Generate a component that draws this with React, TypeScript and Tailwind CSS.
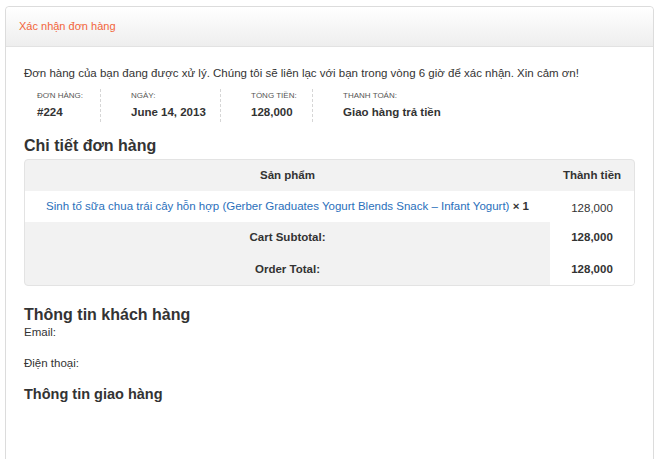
const font = { fontFamily: '"Liberation Sans", Arial, sans-serif' };

const details = [
  { label: 'Đơn hàng:', value: '#224', w: 'w-[64px]' },
  { label: 'Ngày:', value: 'June 14, 2013', w: 'w-[90px]' },
  { label: 'Tổng tiền:', value: '128,000', w: 'w-[62px]' },
  { label: 'Thanh toán:', value: 'Giao hàng trả tiền', w: '' },
];

export default function App() {
  return (
    <div className="h-[459px] overflow-hidden bg-white px-[5px] pt-[6px] text-[#333]" style={font}>
      <div className="h-[470px] rounded-[4px] border border-[#dcdcdc] bg-white">
        {/* Header */}
        <div className="flex h-[40px] items-center rounded-t-[4px] border-b border-[#e2e2e2] bg-gradient-to-b from-white to-[#eeeeee] pl-[13px]">
          <h2 className="text-[11px] text-[#f2643a]">Xác nhận đơn hàng</h2>
        </div>

        <div className="px-[18px] pt-[19px]">
          <p className="text-[11.5px] leading-[14px]">
            Đơn hàng của bạn đang được xử lý. Chúng tôi sẽ liên lạc với bạn trong vòng 6 giờ để xác nhận. Xin cảm ơn!
          </p>

          <ul className="ml-[13px] mt-[9px] flex">
            {details.map((d, i) => (
              <li
                key={d.label}
                className={
                  i < details.length - 1
                    ? `${d.w} mr-[30px] shrink-0 border-r border-dashed border-[#d6d6d6] py-[2px]`
                    : 'py-[2px]'
                }
              >
                <div className="text-[8px] uppercase leading-[10px] text-[#555]">{d.label}</div>
                <div className="mt-[3px] text-[11.5px] font-bold leading-[16px] text-[#333]">{d.value}</div>
              </li>
            ))}
          </ul>

          <h2 className="mt-[14px] text-[16px] font-bold leading-[20px]">Chi tiết đơn hàng</h2>

          <table className="mt-[3px] w-full border-separate border-spacing-0 overflow-hidden rounded-[4px] border border-[#e3e3e3] bg-[#f2f2f2] text-[11.5px]">
            <thead>
              <tr className="h-[31px]">
                <th className="font-bold">Sản phẩm</th>
                <th className="w-[84px] font-bold">Thành tiền</th>
              </tr>
            </thead>
            <tbody>
              <tr className="h-[31px] bg-white">
                <td className="text-center">
                  <a className="text-[#2a6fbb]">
                    Sinh tố sữa chua trái cây hỗn hợp (Gerber Graduates Yogurt Blends Snack – Infant Yogurt)
                  </a>{' '}
                  <strong>× 1</strong>
                </td>
                <td className="pt-[4px] text-center">128,000</td>
              </tr>
              <tr className="h-[32px]">
                <th className="font-bold">Cart Subtotal:</th>
                <td className="bg-white text-center font-bold">128,000</td>
              </tr>
              <tr className="h-[31px]">
                <th className="font-bold">Order Total:</th>
                <td className="bg-white text-center font-bold">128,000</td>
              </tr>
            </tbody>
          </table>

          <h2 className="mt-[19px] text-[16px] font-bold leading-[20px]">Thông tin khách hàng</h2>
          <p className="text-[11.5px] leading-[14px]">Email:</p>
          <p className="mt-[17px] text-[11.5px] leading-[14px]">Điện thoại:</p>

          <h3 className="mt-[15px] text-[14.5px] font-bold leading-[18px]">Thông tin giao hàng</h3>
        </div>
      </div>
    </div>
  );
}
